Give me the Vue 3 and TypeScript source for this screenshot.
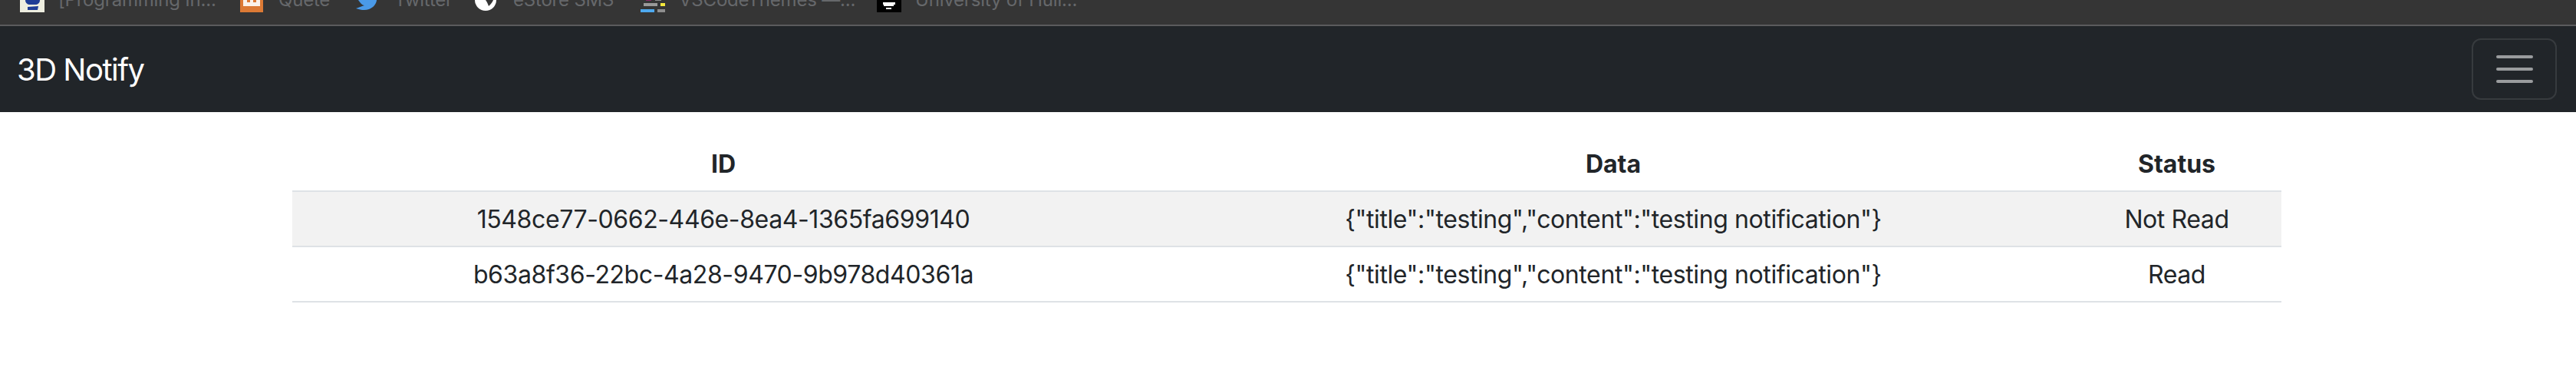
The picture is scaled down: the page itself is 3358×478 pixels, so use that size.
<script setup lang="ts">
interface Bookmark { label: string; icon: string; width: number }
const bookmarks: Bookmark[] = [
  { label: '[Programming In...', icon: 'book', width: 202 },
  { label: 'Quete', icon: 'quete', width: 66 },
  { label: 'Twitter', icon: 'twitter', width: 70 },
  { label: 'eStore SMS', icon: 'estore', width: 131 },
  { label: 'VSCodeThemes —...', icon: 'vs', width: 223 },
  { label: 'University of Hull...', icon: 'hull', width: 210 },
]
interface Row { id: string; data: string; status: string }
const rows: Row[] = [
  { id: '1548ce77-0662-446e-8ea4-1365fa699140', data: '{"title":"testing","content":"testing notification"}', status: 'Not Read' },
  { id: 'b63a8f36-22bc-4a28-9470-9b978d40361a', data: '{"title":"testing","content":"testing notification"}', status: 'Read' },
]
</script>

<template>
  <div class="page">
    <div class="bookmarks">
      <div class="bookmark-row">
        <div v-for="b in bookmarks" :key="b.label" class="bookmark">
          <svg class="favicon" viewBox="0 0 32 32" width="32" height="32">
            <template v-if="b.icon === 'book'">
              <rect width="32" height="32" fill="#eeeee0" />
              <path d="M7 0h19v16c0 4-3 6-6 6h-7c-3 0-6-2-6-6z" fill="#1f3d96" />
              <path d="M10 25l14-1-1 5-13 0z" fill="#1f3d96" />
            </template>
            <template v-else-if="b.icon === 'quete'">
              <rect width="30" height="32" fill="#dc7a35" />
              <path d="M4 10h5v9h4v-9h4v9h4v-9h5v14H4z" fill="#fbf2ea" />
            </template>
            <template v-else-if="b.icon === 'twitter'">
              <path d="M3 16C6 20 8 23 11 23L0 27C6 29 12 30 17 28C23 26 27 20 27 16Z" fill="#4a9ae8" />
            </template>
            <template v-else-if="b.icon === 'estore'">
              <circle cx="14" cy="16" r="14" fill="#fff" />
              <path d="M14 16h10c-1 3-3 5-6 8-1-3-2-5-4-8z" fill="#353535" />
            </template>
            <template v-else-if="b.icon === 'vs'">
              <rect x="7" y="14" width="7" height="3" fill="#8a2a6a" />
              <rect x="19" y="14" width="8" height="3" fill="#8e8e8e" />
              <rect x="4" y="20" width="18" height="4" fill="#9a9a9a" />
              <rect x="26" y="20" width="6" height="4" fill="#f4e83c" />
              <rect y="28" width="18" height="4" fill="#4ea9ef" />
              <rect x="22" y="28" width="10" height="4" fill="#8e8e8e" />
            </template>
            <template v-else>
              <rect width="32" height="32" fill="#000" />
              <rect x="8" y="19" width="16" height="3" fill="#fff" />
              <rect x="9" y="22" width="13" height="2" fill="#fff" />
              <rect x="12" y="26" width="7" height="2" fill="#fff" />
            </template>
          </svg>
          <span class="bookmark-label" :style="{ width: b.width + 'px' }">{{ b.label }}</span>
        </div>
      </div>
    </div>

    <nav class="navbar">
      <a class="brand">3D Notify</a>
      <button class="toggler" type="button" aria-label="Toggle navigation">
        <span class="bar"></span>
        <span class="bar"></span>
        <span class="bar"></span>
      </button>
    </nav>

    <table class="table">
      <colgroup>
        <col class="col-id" />
        <col class="col-data" />
        <col class="col-status" />
      </colgroup>
      <thead>
        <tr>
          <th>ID</th>
          <th>Data</th>
          <th>Status</th>
        </tr>
      </thead>
      <tbody>
        <tr v-for="r in rows" :key="r.id">
          <td>{{ r.id }}</td>
          <td>{{ r.data }}</td>
          <td>{{ r.status }}</td>
        </tr>
      </tbody>
    </table>
  </div>
</template>

<style>
html, body { margin: 0; background: #fff; }
</style>

<style scoped>
.page {
  width: 3358px;
  height: 478px;
  overflow: hidden;
  font-family: Inter, "Liberation Sans", sans-serif;
  color: #212529;
}
.bookmarks {
  height: 32px;
  background: #353535;
  border-bottom: 2px solid #5b5b5d;
  overflow: hidden;
}
.bookmark-row {
  display: flex;
  align-items: center;
  gap: 35px;
  height: 32px;
  margin-top: -16px;
  padding-left: 26px;
}
.bookmark {
  display: flex;
  align-items: center;
  gap: 18px;
  height: 32px;
}
.favicon { flex: none; display: block; }
.bookmark-label {
  font-size: 24px;
  line-height: 32px;
  letter-spacing: -0.2px;
  color: #66686b;
  white-space: nowrap;
}
.navbar {
  display: flex;
  align-items: center;
  justify-content: space-between;
  height: 112px;
  padding: 0 25px 0 22px;
  background: #212529;
}
.brand {
  color: #fff;
  font-size: 40px;
  letter-spacing: -1.5px;
}
.toggler {
  display: flex;
  flex-direction: column;
  align-items: center;
  justify-content: center;
  gap: 12px;
  width: 111px;
  height: 80px;
  padding: 0;
  background: transparent;
  border: 2px solid rgba(255, 255, 255, 0.1);
  border-radius: 12px;
}
.bar {
  display: block;
  width: 48px;
  height: 4px;
  border-radius: 2px;
  background: rgba(255, 255, 255, 0.55);
}
.table {
  width: 2593px;
  margin: 32px 0 0 381px;
  table-layout: fixed;
  border-collapse: collapse;
  font-size: 32px;
  line-height: 48px;
}
.col-id { width: 1124px; }
.col-data { width: 1196px; }
.col-status { width: 273px; }
th, td {
  padding: 12px 0 10px;
  text-align: center;
  white-space: nowrap;
  border-bottom: 2px solid #dee2e6;
}
th { font-weight: 700; }
td { font-weight: 400; letter-spacing: -0.4px; }
tbody tr:nth-child(odd) { background: #f2f2f2; }
</style>
